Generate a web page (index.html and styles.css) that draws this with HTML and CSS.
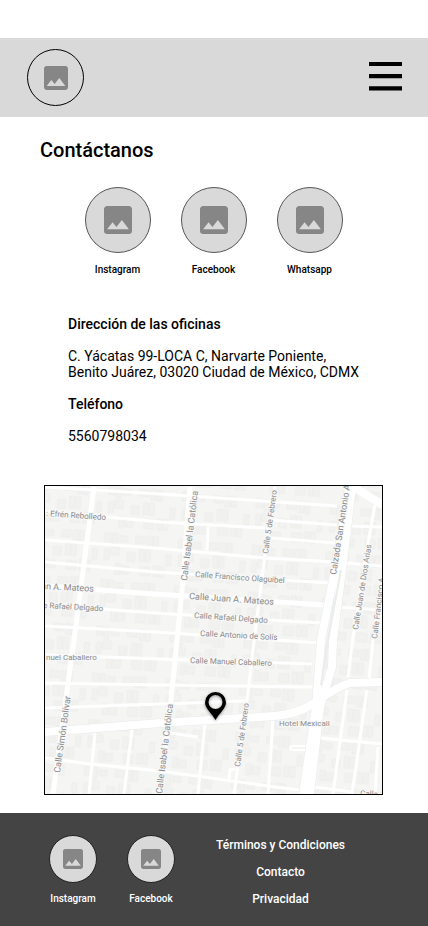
FILE: index.html
```html
<!DOCTYPE html>
<html lang="es">
<head>
<meta charset="utf-8">
<meta name="viewport" content="width=device-width, initial-scale=1">
<title>Contáctanos</title>
<link rel="stylesheet" href="styles.css">
</head>
<body>
<svg class="defs" aria-hidden="true">
  <symbol id="image" viewBox="3 3 18 18"><path d="M21 19V5c0-1.100-.9-2-2-2H5c-1.100 0-2 .9-2 2v14c0 1.100.9 2 2 2h14c1.100 0 2-.9 2-2zM8.500 13.500l2.500 3.010L14.500 12l4.500 6H5l3.500-4.500z"/></symbol>
</svg>
<header class="header">
  <a class="avatar avatar-logo" href="#" aria-label="Inicio"><svg><use href="#image"/></svg></a>
  <button class="menu" type="button" aria-label="Menú">
    <svg viewBox="0 0 33 31"><path d="M0 2h33M0 14.200h33M0 26.400h33" stroke="#000" stroke-width="4.200"/></svg>
  </button>
</header>
<main class="main">
  <h1 class="title">Contáctanos</h1>
  <nav class="social" aria-label="Redes sociales">
    <a class="social-link" href="#"><span class="avatar avatar-social"><svg><use href="#image"/></svg></span>Instagram</a>
    <a class="social-link" href="#"><span class="avatar avatar-social"><svg><use href="#image"/></svg></span>Facebook</a>
    <a class="social-link" href="#"><span class="avatar avatar-social"><svg><use href="#image"/></svg></span>Whatsapp</a>
  </nav>
  <section class="info">
    <h2>Dirección de las oficinas</h2>
    <p>C. Yácatas 99-LOCA C, Narvarte Poniente,<br>Benito Juárez, 03020 Ciudad de México, CDMX</p>
    <h2>Teléfono</h2>
    <p>5560798034</p>
  </section>
  <svg class="map" viewBox="45 486 337 308" role="img" aria-label="Mapa de la oficina">
    <defs>
      <pattern id="lots" width="74" height="47" patternUnits="userSpaceOnUse" patternTransform="rotate(5)">
        <path class="lot" d="M3 4h7v9H3zM11 4h5v12h-5zM18 6h8v6h-8zM34 5h10v7H34zM46 4h5v11h-5zM52 4h5v11h-5zM4 20h5v11H4zM10 18h9v8h-9zM27 22h8v9h-8zM39 18h5v12h-5zM45 18h5v12h-5zM66 21h5v11h-5zM16 34h5v11h-5zM22 36h8v8h-8zM41 35h10v9H41zM54 33h5v11h-5zM60 33h5v11h-5z"/>
      </pattern>
      <filter id="shadow" x="-50%" y="-50%" width="200%" height="200%"><feDropShadow dx="0" dy="1" stdDeviation="1.500" flood-opacity=".4"/></filter>
    </defs>
    <rect class="land" x="45" y="486" width="337" height="308"/>
    <rect fill="url(#lots)" x="45" y="486" width="337" height="308"/>
    <g class="road minor">
      <path d="M45 487L160 494L337 506M45 511L107 517L160 522L265 528M270 520L337 525M270 538L336 543M45 540L155 548L265 558L336 562M45 562L155 572L330 583M45 626L155 632L320 643M45 605L155 613L322 623"/>
      <path d="M45 655L160 659L312 664M45 683L160 685L312 687M45 708L160 704L245 701M45 758L90 764L160 771L275 787L300 790"/>
      <path d="M95 733L89 794M132 730L124 794M205 723L198 794M273 720L268 794M170 733L198 737M208 527L207 550M275 487L265 555L255 633L247 700L234 794M229 780L230 770L235 769"/>
      <path d="M375 505L368 543L353 637L348 677M347 690L333 794M383 580L373 640L369 680M367 690L352 794M378 747L375 794M350 526L383 527M347 563L383 566M337 607L383 610M320 738L383 744M313 787L353 792"/>
      <path d="M306 746h-12q-4 0-4 2t4 2h11" stroke-width="2"/>
    </g>
    <g class="road major">
      <path d="M94 487L74 640L68 683L53 794M190 487L183 580L177 640L171 700L160 794M45 586L155 594L325 605"/>
    </g>
    <path class="avenue-edge" d="M349 487L335 570L321 640L316 707L303 794M352 487L342 570L333 640L332 667L320 707L310 794M45 732L160 723L275 716Q300 714 317 701Q337 687 350 683L383 682"/>
    <g class="road avenue">
      <path d="M349 487L335 570L321 640L316 707L303 794M352 487L342 570L333 640L332 667L320 707L310 794M45 732L160 723L275 716Q300 714 317 701Q337 687 350 683L383 682M352 486L383 505"/>
    </g>
    <path class="tram" d="M341 570L328 640L321 685"/>
    <g class="street">
      <text class="s8" transform="translate(46 516) rotate(4)">: Efrén Rebolledo</text>
      <text class="s9" transform="translate(41 589) rotate(3)">an A. Mateos</text>
      <text class="s8" transform="translate(43 608) rotate(3)">e Rafaél Delgado</text>
      <text class="s8" transform="translate(46 660)">nuel Caballero</text>
      <text class="s8" transform="translate(195 577) rotate(4)">Calle Francisco Olaguibel</text>
      <text class="s9" transform="translate(189 599) rotate(4)">Calle Juan A. Mateos</text>
      <text class="s8" transform="translate(194 618) rotate(4)">Calle Rafaél Delgado</text>
      <text class="s8" transform="translate(200 636) rotate(3)">Calle Antonio de Solís</text>
      <text class="s8" transform="translate(190 663) rotate(2)">Calle Manuel Caballero</text>
      <text class="s8" transform="translate(279 726)">Hotel Mexicali</text>
      <text class="s9" transform="translate(187 581) rotate(-83)">Calle Isabel la Católica</text>
      <text class="s9" transform="translate(162 794) rotate(-83)">Calle Isabel la Católica</text>
      <text class="s8" transform="translate(268 554) rotate(-82)">Calle 5 de Febrero</text>
      <text class="s8" transform="translate(240 767) rotate(-82)">Calle 5 de Febrero</text>
      <text class="s9" transform="translate(60 773) rotate(-82)">Calle Simón Bolívar</text>
      <text class="s9" transform="translate(336 575) rotate(-81)">Calzada San Antonio A</text>
      <text class="s8" transform="translate(358 630) rotate(-81)">Calle Juan de Dios Arias</text>
      <text class="s8" transform="translate(377 639) rotate(-83)">Calle Francisco A</text>
      <text class="s8" transform="translate(360 796) rotate(3)">Calle</text>
    </g>
    <path class="pin" fill-rule="evenodd" filter="url(#shadow)" d="M215.500 720C212 713.500 205 708.500 205 702.500a10.500 10.500 0 0 1 21 0C226 708.500 219 713.500 215.500 720zM215.500 695a7 7 0 1 0 0 14a7 7 0 1 0 0-14z"/>
  </svg>
</main>
<footer class="footer">
  <nav class="footer-social" aria-label="Redes sociales">
    <a class="social-link" href="#"><span class="avatar avatar-footer"><svg><use href="#image"/></svg></span>Instagram</a>
    <a class="social-link" href="#"><span class="avatar avatar-footer"><svg><use href="#image"/></svg></span>Facebook</a>
  </nav>
  <nav class="footer-links" aria-label="Enlaces">
    <a href="#">Términos y Condiciones</a>
    <a href="#">Contacto</a>
    <a href="#">Privacidad</a>
  </nav>
</footer>
</body>
</html>
```
FILE: styles.css
```css
* { box-sizing: border-box; }
body {
  margin: 0;
  padding-top: 38px;
  min-height: 100vh;
  display: flex;
  flex-direction: column;
  background: #fff;
  color: #000;
  font: 14px/16px Roboto, sans-serif;
}
a { color: inherit; text-decoration: none; }
.defs { position: absolute; width: 0; height: 0; }
.header {
  display: flex;
  align-items: center;
  justify-content: space-between;
  padding: 11px 26px 11px 27px;
  background: #d9d9d9;
}
.avatar {
  display: flex;
  align-items: center;
  justify-content: center;
  border: 1px solid #000;
  border-radius: 50%;
  background: #d9d9d9;
  color: #868686;
}
.avatar svg { fill: currentColor; }
.avatar-logo { width: 57px; height: 57px; }
.avatar-logo svg { width: 24px; height: 24px; }
.avatar-social { width: 66px; height: 66px; border-color: #555; }
.avatar-social svg { width: 28px; height: 28px; }
.avatar-footer { width: 48px; height: 48px; border-color: #222; }
.avatar-footer svg { width: 20px; height: 20px; }
.menu { padding: 0; border: 0; background: none; }
.menu svg { display: block; width: 33px; height: 31px; }
.main { flex: 1; padding: 21px 45px 18px 44px; }
.title {
  margin: 0 -4px;
  font-size: 20px;
  line-height: 24px;
  font-weight: 500;
}
.social {
  display: flex;
  justify-content: center;
  gap: 30px;
  margin-top: 25px;
}
.social-link {
  display: flex;
  flex-direction: column;
  align-items: center;
  gap: 11px;
  font-size: 10px;
  line-height: 12px;
  font-weight: 500;
}
.info { margin: 40px 0 41px; padding-left: 24px; }
.info h2 { margin: 0 0 16px; font-size: 14px; font-weight: 500; }
.info p { margin: 0 0 16px; white-space: nowrap; }
.info p:last-child { margin-bottom: 0; }
.map { display: block; width: 100%; border: 1px solid #000; }
.land { fill: #f5f5f4; }
.lot { fill: #f1f1f0; stroke: #eeeeed; stroke-width: 1; }
.road { fill: none; stroke: #fff; }
.minor { stroke-width: 3; }
.major { stroke-width: 5; }
.avenue { stroke-width: 8; }
.avenue-edge { fill: none; stroke: #e8ebe9; stroke-width: 9; }
.tram { fill: none; stroke: #e9eeeb; stroke-width: 2; }
.street { fill: #8a8a8a; stroke: #f8f8f8; stroke-width: 2; paint-order: stroke; }
.s8 { font-size: 8px; }
.s9 { font-size: 9px; }
.pin { fill: #000; }
.footer {
  display: flex;
  align-items: flex-start;
  gap: 41px;
  padding: 22px 49px 21px;
  background: #444;
  color: #fff;
}
.footer-social { display: flex; gap: 30px; }
.footer-social .social-link { gap: 10px; }
.footer-links {
  display: flex;
  flex-direction: column;
  align-items: center;
  gap: 11px;
  padding-top: 2px;
  font-size: 12px;
  font-weight: 500;
  white-space: nowrap;
}
```
